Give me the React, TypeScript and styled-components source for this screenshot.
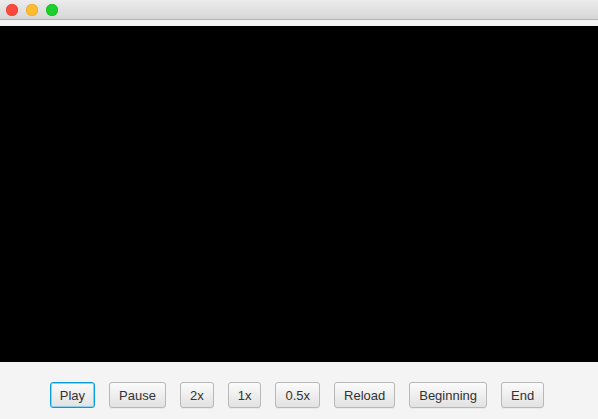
import styled, { createGlobalStyle } from 'styled-components';

const GlobalStyle = createGlobalStyle`
  html, body {
    margin: 0;
    padding: 0;
    background: #f4f4f4;
  }
  #root {
    height: 419px;
  }
`;

const Window = styled.div`
  width: 598px;
  height: 419px;
  display: flex;
  flex-direction: column;
  background: #f4f4f4;
  font-family: 'Liberation Sans', Arial, sans-serif;
  overflow: hidden;
`;

const TitleBar = styled.div`
  height: 20px;
  flex-shrink: 0;
  display: flex;
  align-items: center;
  gap: 8px;
  padding-left: 6px;
  background: linear-gradient(#ececec, #d6d6d6);
  border-bottom: 1px solid #b3b3b3;
  box-sizing: border-box;
`;

const Light = styled.span<{ $color: string; $edge: string }>`
  width: 12px;
  height: 12px;
  border-radius: 50%;
  background: ${(p) => p.$color};
  box-shadow: inset 0 0 0 0.5px ${(p) => p.$edge};
`;

const Gap = styled.div`
  height: 6px;
  flex-shrink: 0;
  background: #f4f4f4;
`;

const Video = styled.div`
  height: 336px;
  flex-shrink: 0;
  background: #000;
`;

const Controls = styled.div`
  flex: 1;
  display: flex;
  align-items: flex-start;
  justify-content: center;
  gap: 14px;
  padding-top: 20px;
  padding-right: 4px;
`;

const Button = styled.button<{ $focused?: boolean }>`
  height: 26px;
  padding: 0 9px;
  font-family: 'Liberation Sans', Arial, sans-serif;
  font-size: 13px;
  color: #333;
  background: linear-gradient(#fbfbfb, #e2e2e2);
  border: 1px solid ${(p) => (p.$focused ? '#0a9bd6' : '#b8b8b8')};
  border-radius: 3px;
  box-shadow: ${(p) =>
    p.$focused ? 'inset 0 0 0 1px #8ed0ee' : '0 1px 0 rgba(0,0,0,0.04)'};
  cursor: pointer;
`;

const labels = ['Play', 'Pause', '2x', '1x', '0.5x', 'Reload', 'Beginning', 'End'];

export default function App() {
  return (
    <>
      <GlobalStyle />
      <Window>
        <TitleBar>
          <Light $color="#fc4b3c" $edge="#e0392b" />
          <Light $color="#fdbb2d" $edge="#e0a020" />
          <Light $color="#1dcf2c" $edge="#14b021" />
        </TitleBar>
        <Gap />
        <Video />
        <Controls>
          {labels.map((l) => (
            <Button key={l} $focused={l === 'Play'}>
              {l}
            </Button>
          ))}
        </Controls>
      </Window>
    </>
  );
}
